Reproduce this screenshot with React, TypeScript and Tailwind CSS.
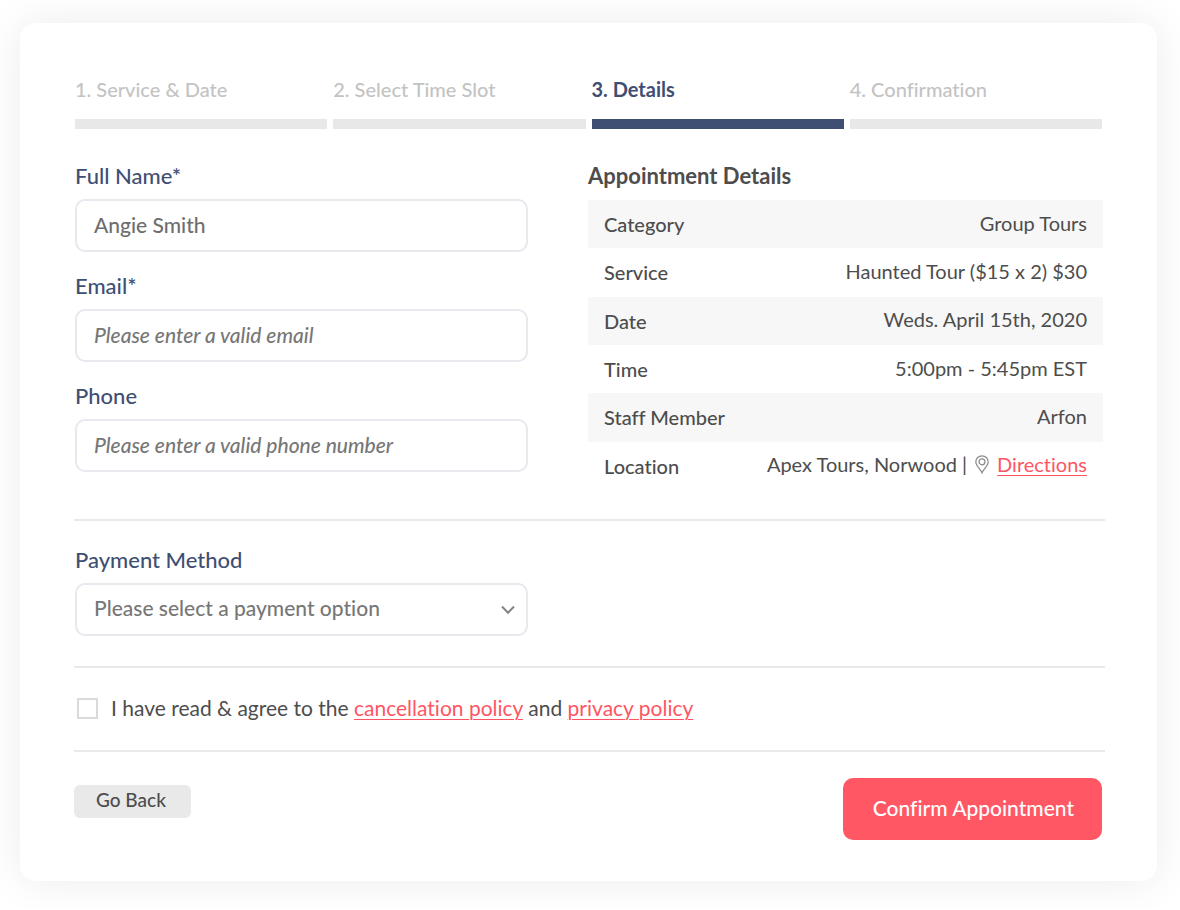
import React, { useState } from 'react';

const steps = ['1. Service & Date', '2. Select Time Slot', '3. Details', '4. Confirmation'];
const currentStep = 2;

const details = [
  { label: 'Category', value: 'Group Tours' },
  { label: 'Service', value: 'Haunted Tour ($15 x 2) $30' },
  { label: 'Date', value: 'Weds. April 15th, 2020' },
  { label: 'Time', value: '5:00pm - 5:45pm EST' },
  { label: 'Staff Member', value: 'Arfon' },
];

const linkClass = 'text-[#ff5563] underline decoration-1 underline-offset-3';

interface FieldProps {
  id: string;
  label: string;
  type?: string;
  placeholder?: string;
  value: string;
  onChange: (value: string) => void;
}

const Field: React.FC<FieldProps> = ({ id, label, type = 'text', placeholder, value, onChange }) => (
  <div>
    <label htmlFor={id} className="block text-[22px] leading-7 font-medium text-[#3f4f73]">
      {label}
    </label>
    <input
      id={id}
      type={type}
      className="mt-[9px] block h-[53px] w-full rounded-[10px] border-2 border-[#e8e9ee] bg-white px-[17px] pb-[3px] text-[21px] font-medium text-[#6e6e6e] placeholder:italic placeholder:text-[#777777] focus:border-[#3f4f73] focus:outline-none"
      placeholder={placeholder}
      value={value}
      onChange={(e) => onChange(e.target.value)}
    />
  </div>
);

const PinIcon = () => (
  <svg width="14" height="19" viewBox="0 0 14 19" fill="none" stroke="#8a8a8a" strokeWidth="1.2" aria-hidden="true">
    <path d="M7 17.8C5.6 14.2 0.8 10.6 0.8 6.9C0.8 3.4 3.6 0.8 7 0.8C10.4 0.8 13.2 3.4 13.2 6.9C13.2 10.6 8.4 14.2 7 17.8Z" />
    <circle cx="7" cy="6.8" r="3" />
  </svg>
);

const App: React.FC = () => {
  const [name, setName] = useState('Angie Smith');
  const [email, setEmail] = useState('');
  const [phone, setPhone] = useState('');
  const [payment, setPayment] = useState('');
  const [agreed, setAgreed] = useState(false);

  return (
    <div className="bg-white pt-[23px] pr-[23px] pb-7 pl-5 font-[Lato,'Open_Sans',sans-serif] text-[20px] text-[#4d4d4d] [font-variant-ligatures:no-common-ligatures]">
      <form
        onSubmit={(e) => e.preventDefault()}
        className="rounded-2xl bg-white pt-[52px] pr-[52px] pb-[41px] pl-[54px] shadow-[0_0_44px_rgba(0,0,0,0.08)]"
      >
        <ol className="mr-[3px] ml-px grid grid-cols-4 gap-[6px]">
          {steps.map((step, i) => (
            <li key={step} aria-current={i === currentStep ? 'step' : undefined}>
              <span
                className={
                  i === currentStep
                    ? 'block leading-7 font-bold text-[#3f4f73]'
                    : 'block leading-7 font-medium text-[#c3c3c3]'
                }
              >
                {step}
              </span>
              <div className={i === currentStep ? 'mt-4 h-[10px] bg-[#3f4f73]' : 'mt-4 h-[10px] bg-[#e8e8e8]'} />
            </li>
          ))}
        </ol>

        <div className="mt-[33px] grid grid-cols-[453fr_515fr] gap-[60px] pr-[2px] pl-px">
          <div className="flex flex-col gap-5">
            <Field id="name" label="Full Name*" value={name} onChange={setName} />
            <Field
              id="email"
              label="Email*"
              type="email"
              placeholder="Please enter a valid email"
              value={email}
              onChange={setEmail}
            />
            <Field
              id="phone"
              label="Phone"
              type="tel"
              placeholder="Please enter a valid phone number"
              value={phone}
              onChange={setPhone}
            />
          </div>

          <div>
            <h2 className="text-[22px] leading-7 font-bold">Appointment Details</h2>
            <table className="mt-[10px] h-[290px] w-full">
              <tbody>
                {details.map((row) => (
                  <tr key={row.label} className="odd:bg-[#f7f7f7]">
                    <th scope="row" className="pl-4 text-left font-medium">{row.label}</th>
                    <td className="pr-4 pb-[3px] text-right">{row.value}</td>
                  </tr>
                ))}
                <tr>
                  <th scope="row" className="pl-4 text-left font-medium">Location</th>
                  <td className="pr-4 pb-[3px]">
                    <div className="flex items-center justify-end gap-2">
                      <span>Apex Tours, Norwood |</span>
                      <PinIcon />
                      <a href="#directions" className={linkClass}>Directions</a>
                    </div>
                  </td>
                </tr>
              </tbody>
            </table>
          </div>
        </div>

        <div className="mt-[29px] border-t-2 border-[#e9e9e9] pt-[25px] pb-[30px] pl-px">
          <label htmlFor="payment" className="block text-[22px] leading-7 font-medium text-[#3f4f73]">
            Payment Method
          </label>
          <div className="mt-[9px] grid grid-cols-[453fr_515fr] gap-[60px] pr-[2px]">
            <div className="relative">
              <select
                id="payment"
                className="block h-[53px] w-full appearance-none rounded-[10px] border-2 border-[#e8e9ee] bg-white px-[17px] pb-1 text-[21px] font-medium text-[#777777] focus:border-[#3f4f73] focus:outline-none"
                value={payment}
                onChange={(e) => setPayment(e.target.value)}
              >
                <option value="">Please select a payment option</option>
                <option value="card">Credit Card</option>
                <option value="paypal">PayPal</option>
              </select>
              <svg
                className="pointer-events-none absolute top-[22px] right-[13px]"
                width="14"
                height="10"
                viewBox="0 0 14 10"
                fill="none"
                stroke="#858585"
                strokeWidth="2"
                aria-hidden="true"
              >
                <path d="M1 1.5L7 7.8L13 1.5" />
              </svg>
            </div>
          </div>
        </div>

        <div className="flex items-center gap-[13px] border-y-2 border-[#e9e9e9] pt-[26px] pb-7 pl-[3px]">
          <input
            id="agree"
            type="checkbox"
            className="size-[21px] appearance-none border-2 border-[#dadada] bg-white checked:bg-[#3f4f73]"
            checked={agreed}
            onChange={(e) => setAgreed(e.target.checked)}
          />
          <label htmlFor="agree" className="text-[21px] leading-7">
            I have read & agree to the <a href="#cancellation" className={linkClass}>cancellation policy</a> and{' '}
            <a href="#privacy" className={linkClass}>privacy policy</a>
          </label>
        </div>

        <div className="mt-[26px] mr-[3px] flex items-start justify-between">
          <button type="button" className="mt-[7px] h-[33px] rounded-md bg-[#e9e9e9] pr-[25px] pb-[2px] pl-[22px] text-[19px] font-medium">
            Go Back
          </button>
          <button type="submit" className="h-[62px] rounded-[10px] bg-[#ff5764] pr-7 pb-[3px] pl-[30px] text-[21px] font-medium text-white">
            Confirm Appointment
          </button>
        </div>
      </form>
    </div>
  );
};

export default App;
